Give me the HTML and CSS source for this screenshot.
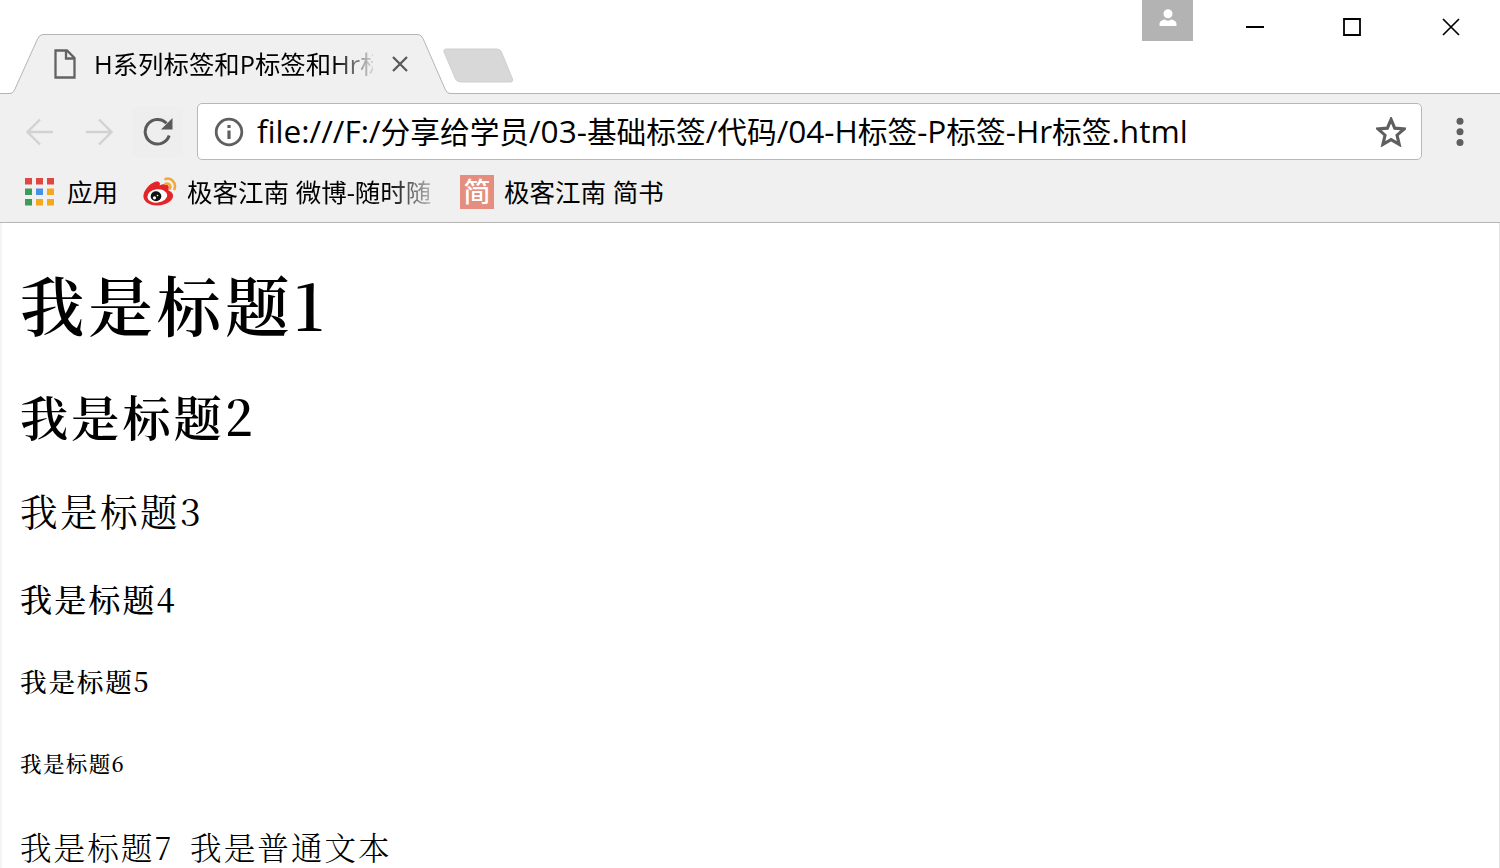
FILE: index.html
```html
<!DOCTYPE html>
<html lang="zh-CN">
<head>
    <meta charset="UTF-8">
    <title>H系列标签和P标签和Hr标签</title>
    <link rel="stylesheet" href="styles.css">
</head>
<body>
    <div class="browser">
        <div class="tabstrip">
            <div class="tab">
                <svg class="tab-shape" width="450" height="60" viewBox="0 0 450 60">
                    <path d="M0 59.5H10Q13 59.5 14.500 56L37.500 5Q39.500 .5 43 .5H418Q421 .5 423 4.500L445.500 56Q447 59.500 450 59.500V60H0Z" fill="#f0f0f0"/>
                    <path d="M0 59.5H10Q13 59.5 14.500 56L37.500 5Q39.500 .5 43 .5H418Q421 .5 423 4.500L445.500 56Q447 59.500 450 59.500" fill="none" stroke="#b5b5b5"/>
                </svg>
                <svg class="tab-file" width="24" height="32" viewBox="0 0 24 32">
                    <path d="M2.500 2.500H14L21.500 10V29.500H2.500ZM13 2.500V10.500H21.500" fill="none" stroke="#636363" stroke-width="2.300"/>
                </svg>
                <span class="tab-title">H系列标签和P标签和Hr标</span>
                <svg class="tab-close" width="18" height="18" viewBox="0 0 18 18">
                    <path d="M2 2L16 16M16 2L2 16" stroke="#5a5a5a" stroke-width="2.300"/>
                </svg>
            </div>
            <svg class="new-tab" width="72" height="36" viewBox="0 0 72 36">
                <path d="M4 1H54Q57 1 58.500 4L69.500 31Q70 34 68 34H18Q14 34 12.500 31L1 4Q0 1 4 1Z" fill="#d8d8d8" stroke="#cfcfcf"/>
            </svg>
            <div class="window-buttons">
                <div class="user">
                    <svg width="18" height="18" viewBox="0 0 18 18" fill="#fff">
                        <circle cx="9" cy="4.700" r="4.500"/>
                        <path d="M.5 17V15C.5 12 4 10.500 6 10.500Q9 13 12 10.500C14 10.500 17.500 12 17.500 15V17Z"/>
                    </svg>
                </div>
                <svg class="win-min" width="18" height="18" viewBox="0 0 18 18"><path d="M0 9H18" stroke="#000" stroke-width="2"/></svg>
                <svg class="win-max" width="18" height="18" viewBox="0 0 18 18"><path d="M1 1H17V17H1Z" fill="none" stroke="#000" stroke-width="1.800"/></svg>
                <svg class="win-close" width="18" height="18" viewBox="0 0 18 18"><path d="M1 1L17 17M17 1L1 17" stroke="#000" stroke-width="1.700"/></svg>
            </div>
        </div>

        <div class="toolbar">
            <svg class="back" width="28" height="28" viewBox="0 0 28 28">
                <path d="M27 14H2M14 1.500L1.500 14L14 26.500" fill="none" stroke="#d2d2d2" stroke-width="2.400"/>
            </svg>
            <svg class="forward" width="28" height="28" viewBox="0 0 28 28">
                <path d="M1 14H26M14 1.500L26.500 14L14 26.500" fill="none" stroke="#d2d2d2" stroke-width="2.400"/>
            </svg>
            <div class="reload">
                <svg width="30" height="30" viewBox="0 0 30 30">
                    <path d="M26.200 18.500A12.300 12.300 0 1 1 23.500 6.300" fill="none" stroke="#5a5a5a" stroke-width="3"/>
                    <path d="M29.500 1V12.500H18Z" fill="#5a5a5a"/>
                </svg>
            </div>
            <div class="address">
                <svg class="info" width="30" height="30" viewBox="0 0 30 30">
                    <circle cx="15" cy="15" r="12.800" fill="none" stroke="#5f5f5f" stroke-width="2.800"/>
                    <path d="M15 13.500V22M15 8V11" stroke="#5f5f5f" stroke-width="3.200"/>
                </svg>
                <span class="url">file:///F:/<span class="cn">分享给学员</span>/03-<span class="cn">基础标签</span>/<span class="cn">代码</span>/04-H<span class="cn">标签</span>-P<span class="cn">标签</span>-Hr<span class="cn">标签</span>.html</span>
                <svg class="star" width="30" height="30" viewBox="0 0 30 30">
                    <path d="M15 3.500L18.200 11.100L26.400 11.800L20.200 17.200L22.100 25.200L15 21L7.900 25.200L9.800 17.200L3.600 11.800L11.800 11.100Z" transform="translate(-2.200 -1.600) scale(1.150)" fill="none" stroke="#5f5f5f" stroke-width="2.700"/>
                </svg>
            </div>
            <svg class="menu" width="8" height="30" viewBox="0 0 8 30" fill="#5f5f5f">
                <circle cx="4" cy="4.200" r="3.500"/>
                <circle cx="4" cy="14.800" r="3.500"/>
                <circle cx="4" cy="25.400" r="3.500"/>
            </svg>
        </div>

        <div class="bookmarks">
            <svg class="apps" width="29" height="28" viewBox="0 0 29 28">
                <path d="M0 0H7V6.500H0ZM11 0H18V6.500H11ZM22 0H29V6.500H22Z" fill="#e04743"/>
                <path d="M0 10.500H7V17H0ZM0 21H7V27.500H0Z" fill="#3c9d58"/>
                <path d="M11 10.500H18V17H11Z" fill="#4a90e2"/>
                <path d="M22 10.500H29V17H22ZM11 21H18V27.500H11ZM22 21H29V27.500H22Z" fill="#f4a81c"/>
            </svg>
            <span class="label">应用</span>
            <svg class="weibo" width="34" height="30" viewBox="0 0 34 30">
                <path d="M.5 18C1.500 11 11 3 15.500 4.800C17.500 5.700 17 7.500 16.500 8.500C20 6.500 26 6.500 25.800 10.500L25.500 13.500C35 17 29 28.500 14 28.500C5 28.500 -.5 23.500 .5 18Z" fill="#e32529"/>
                <ellipse cx="14.300" cy="19" rx="10" ry="6.700" fill="#fff" transform="rotate(-7 14 19)"/>
                <ellipse cx="13" cy="19.300" rx="5.300" ry="5" fill="#111"/>
                <circle cx="11.500" cy="20.800" r="1.600" fill="#fff"/>
                <circle cx="14.500" cy="18.500" r=".8" fill="#fff"/>
                <path d="M22.500 2C28 0 33.500 5.500 31.500 12M22.500 6.800C26 5.500 28.200 8.500 27 11.500" fill="none" stroke="#f0a93a" stroke-width="2.600" stroke-linecap="round"/>
            </svg>
            <span class="label label-fade">极客江南 微博-随时随</span>
            <span class="jianshu">简</span>
            <span class="label">极客江南 简书</span>
        </div>

        <div class="page">
            <h1>我是标题1</h1>
            <h2>我是标题2</h2>
            <h3>我是标题3</h3>
            <h4>我是标题4</h4>
            <h5>我是标题5</h5>
            <h6>我是标题6</h6>
            <p>我是标题7 我是普通文本</p>
        </div>
    </div>
</body>
</html>
```
FILE: styles.css
```css
body {
    margin: 0;
    background-color: #fff;
    color: #000;
    font-family: "Open Sans", "Noto Sans CJK SC", sans-serif;
}
svg {
    display: block;
    flex-shrink: 0;
}
.browser {
    height: 868px;
    overflow: hidden;
}

/* tabs */
.tabstrip {
    display: flex;
    height: 94px;
    box-sizing: border-box;
    border-bottom: 1px solid #b5b5b5;
}
.tab {
    position: relative;
    display: flex;
    align-items: center;
    width: 450px;
    height: 60px;
    margin-top: 34px;
    box-sizing: border-box;
    padding-left: 53px;
}
.tab-shape {
    position: absolute;
    left: 0;
    top: 0;
}
.tab-file,
.tab-title,
.tab-close {
    position: relative;
}
.tab-title {
    width: 279px;
    margin-left: 17px;
    overflow: hidden;
    white-space: nowrap;
    font-size: 25.4px;
    line-height: 36px;
    -webkit-mask-image: linear-gradient(to right, #000 240px, transparent 284px);
    mask-image: linear-gradient(to right, #000 240px, transparent 284px);
}
.tab-close {
    margin-left: 18px;
}
.new-tab {
    margin: 48px 0 0 -7px;
}
.window-buttons {
    display: flex;
    margin-left: auto;
    padding-right: 40px;
}
.user {
    display: flex;
    justify-content: center;
    width: 51px;
    height: 41px;
    padding-top: 9px;
    box-sizing: border-box;
    background-color: #b3b3b3;
}
.win-min,
.win-max,
.win-close {
    margin-top: 18px;
}
.win-min {
    margin-left: 53px;
}
.win-max {
    margin-left: 79px;
}
.win-close {
    margin-left: 81px;
}

/* toolbar */
.toolbar {
    display: flex;
    align-items: center;
    height: 75px;
    padding: 0 36px 0 26px;
    background-color: #f0f0f0;
}
.forward {
    margin-left: 31px;
}
.reload {
    display: flex;
    align-items: center;
    justify-content: center;
    width: 50px;
    height: 50px;
    margin-left: 20px;
    background-color: #eee;
}
.address {
    display: flex;
    align-items: center;
    width: 1225px;
    height: 57px;
    margin-left: 14px;
    padding: 0 15px 0 16px;
    box-sizing: border-box;
    border: 1px solid #b8b8b8;
    border-radius: 5px;
    background-color: #fff;
}
.url {
    flex: 1;
    margin-left: 13px;
    white-space: nowrap;
    font-size: 31.6px;
    line-height: 40px;
}
.cn {
    font-size: 29.7px;
}
.menu {
    margin-left: auto;
}

/* bookmarks */
.bookmarks {
    display: flex;
    align-items: center;
    height: 53px;
    padding: 0 25px;
    border-bottom: 1px solid #b5b5b5;
    background-color: #f0f0f0;
}
.bookmarks > * {
    margin-bottom: 8px;
}
.label {
    font-size: 25.5px;
    line-height: 36px;
    white-space: nowrap;
}
.apps + .label {
    margin-left: 13px;
}
.weibo {
    margin-left: 25px;
}
.label-fade {
    width: 245px;
    margin-left: 10px;
    -webkit-mask-image: linear-gradient(to right, #000 200px, transparent 258px);
    mask-image: linear-gradient(to right, #000 200px, transparent 258px);
}
.jianshu {
    width: 34px;
    height: 34px;
    margin: 0 10px 8px 28px;
    background-color: #e58e80;
    color: #fff;
    font-size: 27px;
    font-weight: 500;
    line-height: 34px;
    text-align: center;
}

/* page content */
.page {
    height: 645px;
    padding-left: 18px;
    border-left: 2px solid #f4f4f4;
    border-right: 1px solid #e4e4e4;
    box-sizing: border-box;
    overflow: hidden;
    font-family: SimSun, "Noto Serif CJK SC", "Liberation Serif", serif;
}
.page > * {
    margin-bottom: 0;
    font-weight: 600;
    letter-spacing: 0.064em;
}
h1 {
    margin-top: 45px;
    font-size: 64.3px;
    line-height: 70px;
}
h2 {
    margin-top: 52px;
    font-size: 48.2px;
    line-height: 52px;
}
.page h3 {
    margin-top: 48px;
    font-size: 37.6px;
    font-weight: 400;
    line-height: 40px;
}
.page h4 {
    margin-top: 51px;
    font-size: 32.1px;
    font-weight: 500;
    line-height: 34px;
}
.page h5 {
    margin-top: 52px;
    font-size: 26.7px;
    font-weight: 500;
    line-height: 28px;
}
.page h6 {
    margin-top: 57px;
    font-size: 21.5px;
    font-weight: 500;
    line-height: 22px;
}
.page p {
    margin-top: 56px;
    font-size: 31.6px;
    font-weight: 300;
    line-height: 34px;
    word-spacing: 0.2em;
}
```
